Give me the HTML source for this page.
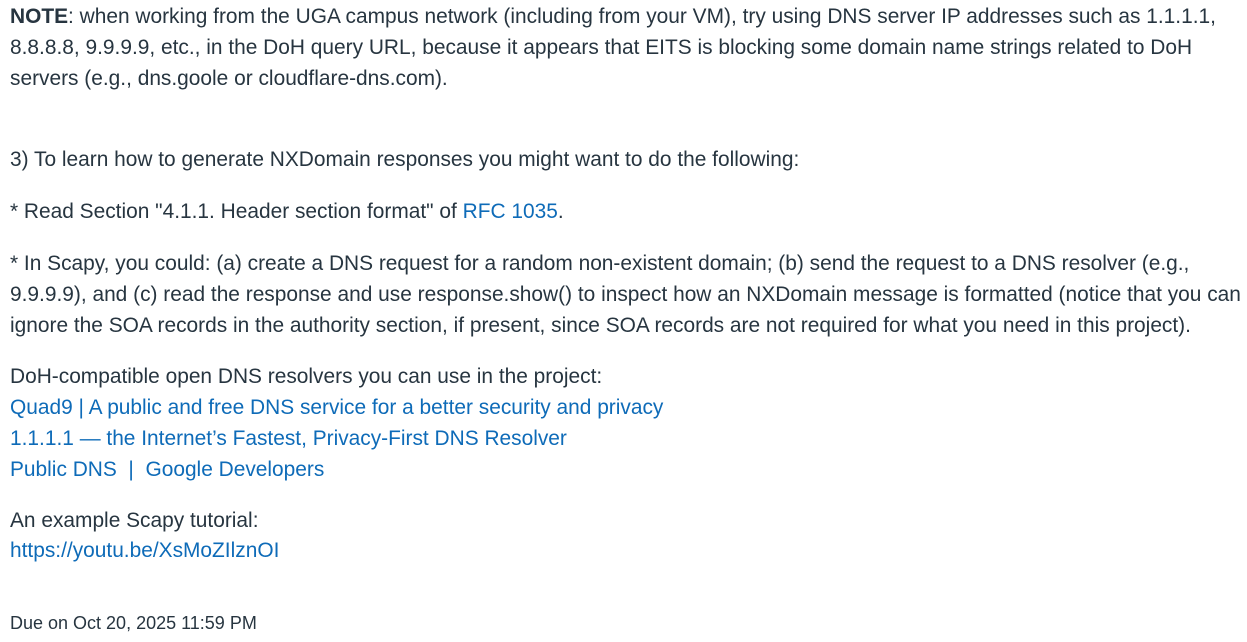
<!DOCTYPE html>
<html><head><meta charset="utf-8"><style>
body{margin:0;width:1247px;height:642px;background:#fff;overflow:hidden;font-family:"Liberation Sans",sans-serif;color:#273540;}
.l{position:absolute;left:10px;height:31px;line-height:31px;font-size:20.9px;white-space:nowrap;}
a{color:#0e6bb8;text-decoration:none;}
.s{font-size:18px;}
</style></head><body>
<div class="l" style="top:1px"><b>NOTE</b>: when working from the UGA campus network (including from your VM), try using DNS server IP addresses such as 1.1.1.1,</div>
<div class="l" style="top:32px">8.8.8.8, 9.9.9.9, etc., in the DoH query URL, because it appears that EITS is blocking some domain name strings related to DoH</div>
<div class="l" style="top:63px">servers (e.g., dns.goole or cloudflare-dns.com).</div>
<div class="l" style="top:144px">3) To learn how to generate NXDomain responses you might want to do the following:</div>
<div class="l" style="top:196px">* Read Section "4.1.1. Header section format" of <a>RFC 1035</a>.</div>
<div class="l" style="top:248px">* In Scapy, you could: (a) create a DNS request for a random non-existent domain; (b) send the request to a DNS resolver (e.g.,</div>
<div class="l" style="top:279px">9.9.9.9), and (c) read the response and use response.show() to inspect how an NXDomain message is formatted (notice that you can</div>
<div class="l" style="top:310px">ignore the SOA records in the authority section, if present, since SOA records are not required for what you need in this project).</div>
<div class="l" style="top:361px">DoH-compatible open DNS resolvers you can use in the project:</div>
<div class="l" style="top:392px"><a>Quad9 | A public and free DNS service for a better security and privacy</a></div>
<div class="l" style="top:423px"><a>1.1.1.1 — the Internet’s Fastest, Privacy-First DNS Resolver</a></div>
<div class="l" style="top:454px"><a>Public DNS &nbsp;| &nbsp;Google Developers</a></div>
<div class="l" style="top:505px">An example Scapy tutorial:</div>
<div class="l" style="top:535px"><a>https://youtu.be/XsMoZIlznOI</a></div>
<div class="l s" style="top:608px">Due on Oct 20, 2025 11:59 PM</div>
</body></html>
